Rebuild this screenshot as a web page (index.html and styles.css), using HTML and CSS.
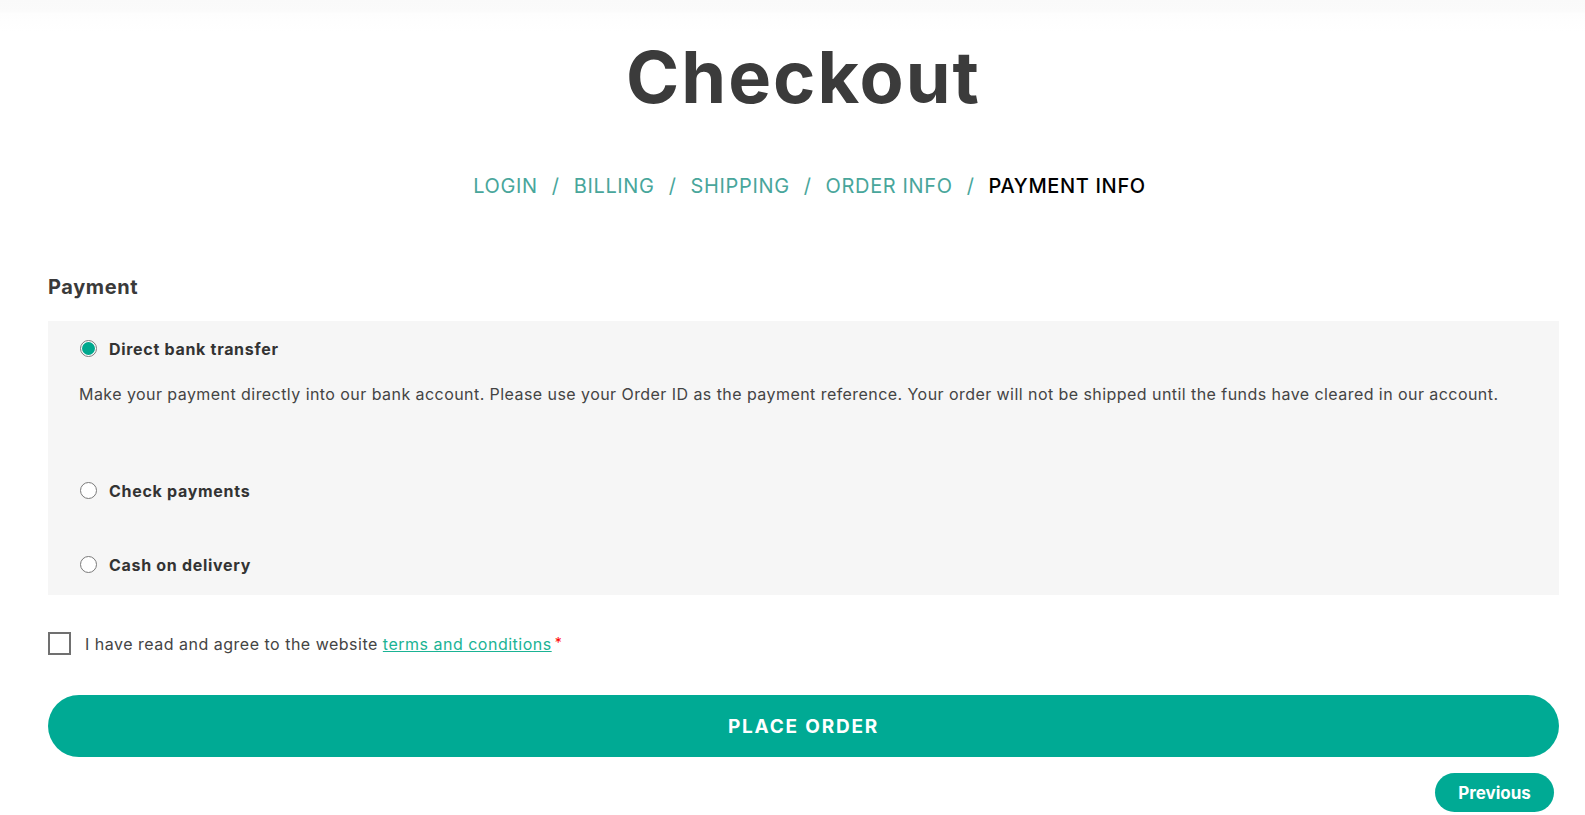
FILE: index.html
```html
<!DOCTYPE html>
<html lang="en">
<head>
<meta charset="utf-8">
<title>Checkout</title>
<link rel="stylesheet" href="styles.css">
</head>
<body>
<div class="top-shade"></div>
<main class="page">
  <h1 class="title">Checkout</h1>
  <nav class="steps">
    <a class="step" href="#">LOGIN</a><span class="sep">/</span>
    <a class="step" href="#">BILLING</a><span class="sep">/</span>
    <a class="step" href="#">SHIPPING</a><span class="sep">/</span>
    <a class="step" href="#">ORDER INFO</a><span class="sep">/</span>
    <span class="step current">PAYMENT INFO</span>
  </nav>

  <section class="payment">
    <h2 class="payment-title">Payment</h2>
    <div class="methods">
      <div class="method method-first">
        <label class="method-label"><span class="radio checked"></span>Direct bank transfer</label>
        <p class="method-desc">Make your payment directly into our bank account. Please use your Order ID as the payment reference. Your order will not be shipped until the funds have cleared in our account.</p>
      </div>
      <div class="method method-check">
        <label class="method-label"><span class="radio"></span>Check payments</label>
      </div>
      <div class="method method-cash">
        <label class="method-label"><span class="radio"></span>Cash on delivery</label>
      </div>
    </div>

    <div class="terms">
      <span class="checkbox"></span>
      <span class="terms-text">I have read and agree to the website <a class="terms-link" href="#">terms and conditions</a><span class="req">*</span></span>
    </div>

    <button class="place-order" type="button">PLACE ORDER</button>
    <div class="nav-row">
      <button class="prev" type="button">Previous</button>
    </div>
  </section>
</main>
</body>
</html>
```

FILE: styles.css
```css
html, body {
  margin: 0;
  padding: 0;
  background: #ffffff;
}
body {
  font-family: "Inter", "Liberation Sans", sans-serif;
  color: #444444;
  width: 1585px;
  height: 815px;
  overflow: hidden;
  position: relative;
}
.top-shade {
  position: absolute;
  top: 0;
  left: 0;
  right: 0;
  height: 32px;
  background: linear-gradient(#fafafa 0, #fbfbfb 12px, #fdfdfd 13px, #ffffff 32px);
}
.page {
  position: relative;
  padding-left: 48px;
  width: 1511px;
  display: flex;
  flex-direction: column;
}
.title {
  margin: 0;
  padding-top: 41px;
  text-align: center;
  font-size: 72px;
  line-height: 72px;
  font-weight: 700;
  color: #3b3b3b;
  letter-spacing: 2px;
}
.steps {
  margin-top: 61px;
  padding-left: 12px;
  display: flex;
  justify-content: center;
  align-items: center;
  font-size: 20px;
  line-height: 24px;
  letter-spacing: 0.65px;
}
.step {
  color: #48a69b;
  text-decoration: none;
  font-weight: 400;
}
.step.current {
  color: #000000;
  font-weight: 500;
}
.sep {
  color: #48a69b;
  margin: 0 14px;
}
.payment {
  display: flex;
  flex-direction: column;
}
.payment-title {
  margin: 77px 0 0 0;
  font-size: 20px;
  line-height: 24px;
  font-weight: 700;
  color: #3a3a3a;
  letter-spacing: 0.6px;
}
.methods {
  margin-top: 22px;
  background: #f6f6f6;
  padding: 19px 30px 0 32px;
  height: 255px;
  display: flex;
  flex-direction: column;
}
.method-label {
  display: flex;
  align-items: center;
  gap: 12px;
  font-size: 16px;
  line-height: 16px;
  font-weight: 700;
  color: #333333;
  letter-spacing: 0.7px;
}
.radio {
  box-sizing: border-box;
  width: 17px;
  height: 17px;
  border-radius: 50%;
  border: 1px solid #7a7a7a;
  background: #ffffff;
  position: relative;
  flex: none;
}
.radio.checked::after {
  content: "";
  position: absolute;
  left: 1px;
  top: 1px;
  width: 13px;
  height: 13px;
  border-radius: 50%;
  background: #00a88e;
}
.method-desc {
  margin: 25px 0 0 -1px;
  font-size: 16px;
  line-height: 24px;
  color: #444444;
  letter-spacing: 0.44px;
}
.method-check {
  margin-top: 76px;
}
.method-cash {
  margin-top: 57px;
}
.terms {
  margin-top: 36px;
  display: flex;
  align-items: center;
  gap: 14px;
}
.checkbox {
  box-sizing: border-box;
  width: 23px;
  height: 23px;
  border: 2px solid #707070;
  background: #ffffff;
  flex: none;
}
.terms-text {
  font-size: 16px;
  line-height: 24px;
  color: #444444;
  letter-spacing: 0.5px;
}
.terms-link {
  color: #1ab394;
  text-decoration: underline;
}
.req {
  color: #ff0000;
  margin-left: 3px;
  font-size: 14px;
  vertical-align: 2px;
}
.place-order {
  margin-top: 39px;
  height: 62px;
  border: none;
  border-radius: 31px;
  background: #00aa94;
  color: #ffffff;
  font-family: "Inter", "Liberation Sans", sans-serif;
  font-size: 19px;
  font-weight: 700;
  letter-spacing: 1.8px;
  cursor: pointer;
}
.nav-row {
  margin-top: 16px;
  display: flex;
  justify-content: flex-end;
  padding-right: 5px;
}
.prev {
  width: 119px;
  height: 39px;
  border: none;
  border-radius: 20px;
  background: #00aa94;
  color: #ffffff;
  font-family: "Inter", "Liberation Sans", sans-serif;
  font-size: 17px;
  font-weight: 700;
  cursor: pointer;
}
```
